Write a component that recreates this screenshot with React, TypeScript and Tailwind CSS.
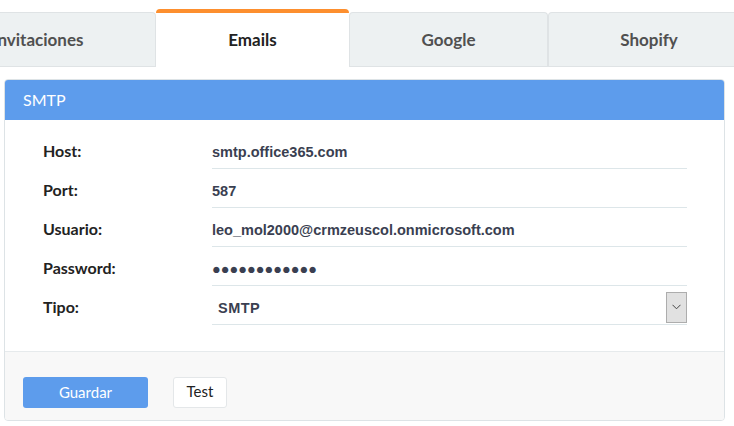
import React from "react";

const sans = { fontFamily: "Lato, 'Open Sans', sans-serif" };
const arial = { fontFamily: "'Liberation Sans', Arial, sans-serif" };

function Field({ label, value, select }: { label: string; value: string; select?: boolean }) {
  return (
    <div className="flex items-stretch h-[39px]">
      <div className="w-[207px] pl-[38px] pt-[9px] text-[16px] font-bold text-[#222]" style={sans}>
        {label}
      </div>
      <div className="w-[475px] flex flex-col justify-end">
        <div className="h-[34px] border-b border-[#dde6e9] flex items-center justify-between">
          <span
            className={`text-[14.5px] font-bold text-[#3a3f51] mt-[3px] ${select ? "pl-[6px] tracking-[0.5px]" : ""}`}
            style={arial}
          >
            {value}
          </span>
          {select && (
            <div className="w-[21px] h-[31px] mb-[1px] bg-[#e1e1e1] border border-[#adadad] flex items-center justify-center">
              <svg width="9" height="6" viewBox="0 0 9 6">
                <path d="M0.5 0.8 L4.5 4.8 L8.5 0.8" fill="none" stroke="#444" strokeWidth="1" />
              </svg>
            </div>
          )}
        </div>
      </div>
    </div>
  );
}

export default function App() {
  return (
    <div className="w-[734px] h-[426px] bg-white overflow-hidden relative" style={sans}>
      {/* Tabs */}
      <div className="flex items-end h-[67px] pt-[9px] ml-[-80px] border-b border-[#dfe3e5] w-[830px]">
        <div className="w-[236px] h-[54px] bg-[#edf1f2] border border-b-0 border-[#dfe3e5] rounded-t-[4px] flex items-center justify-center text-[17px] font-bold text-[#505050]">
          Invitaciones
        </div>
        <div className="w-[193px] h-[58px] bg-white border-t-[4px] border-[#fd8f2e] rounded-t-[4px] flex items-center justify-center text-[17px] font-bold text-[#222] mb-[-1px] relative">
          <span className="mt-[-1px]">Emails</span>
        </div>
        <div className="w-[199px] h-[54px] bg-[#edf1f2] border border-b-0 border-[#dfe3e5] rounded-t-[4px] flex items-center justify-center text-[17px] font-bold text-[#505050]">
          Google
        </div>
        <div className="w-[202px] h-[54px] bg-[#edf1f2] border border-b-0 border-[#dfe3e5] rounded-t-[4px] flex items-center justify-center text-[17px] font-bold text-[#505050]">
          Shopify
        </div>
      </div>

      {/* Panel */}
      <div className="ml-[4px] mt-[12px] w-[721px] border border-[#dde3e6] rounded-[4px] overflow-hidden">
        <div className="h-[40px] bg-[#5d9cec] flex items-center pl-[18px] text-[16px] text-white">SMTP</div>
        <div className="pt-[10px] pb-[26px] bg-white">
          <Field label="Host:" value="smtp.office365.com" />
          <Field label="Port:" value="587" />
          <Field label="Usuario:" value="leo_mol2000@crmzeuscol.onmicrosoft.com" />
          <Field label="Password:" value="●●●●●●●●●●●●" />
          <Field label="Tipo:" value="SMTP" select />
        </div>
        <div className="h-[69px] bg-[#f8f8f8] border-t border-[#e6eaec] flex items-start pt-[25px] pl-[18px] gap-[25px]">
          <button className="w-[125px] h-[31px] bg-[#5d9cec] rounded-[3px] text-white text-[15px] flex items-center justify-center">
            Guardar
          </button>
          <button className="w-[54px] h-[31px] bg-white border border-[#e4e7e9] rounded-[3px] text-[#222] text-[15px] flex items-center justify-center pb-[2px]">
            Test
          </button>
        </div>
      </div>
    </div>
  );
}
